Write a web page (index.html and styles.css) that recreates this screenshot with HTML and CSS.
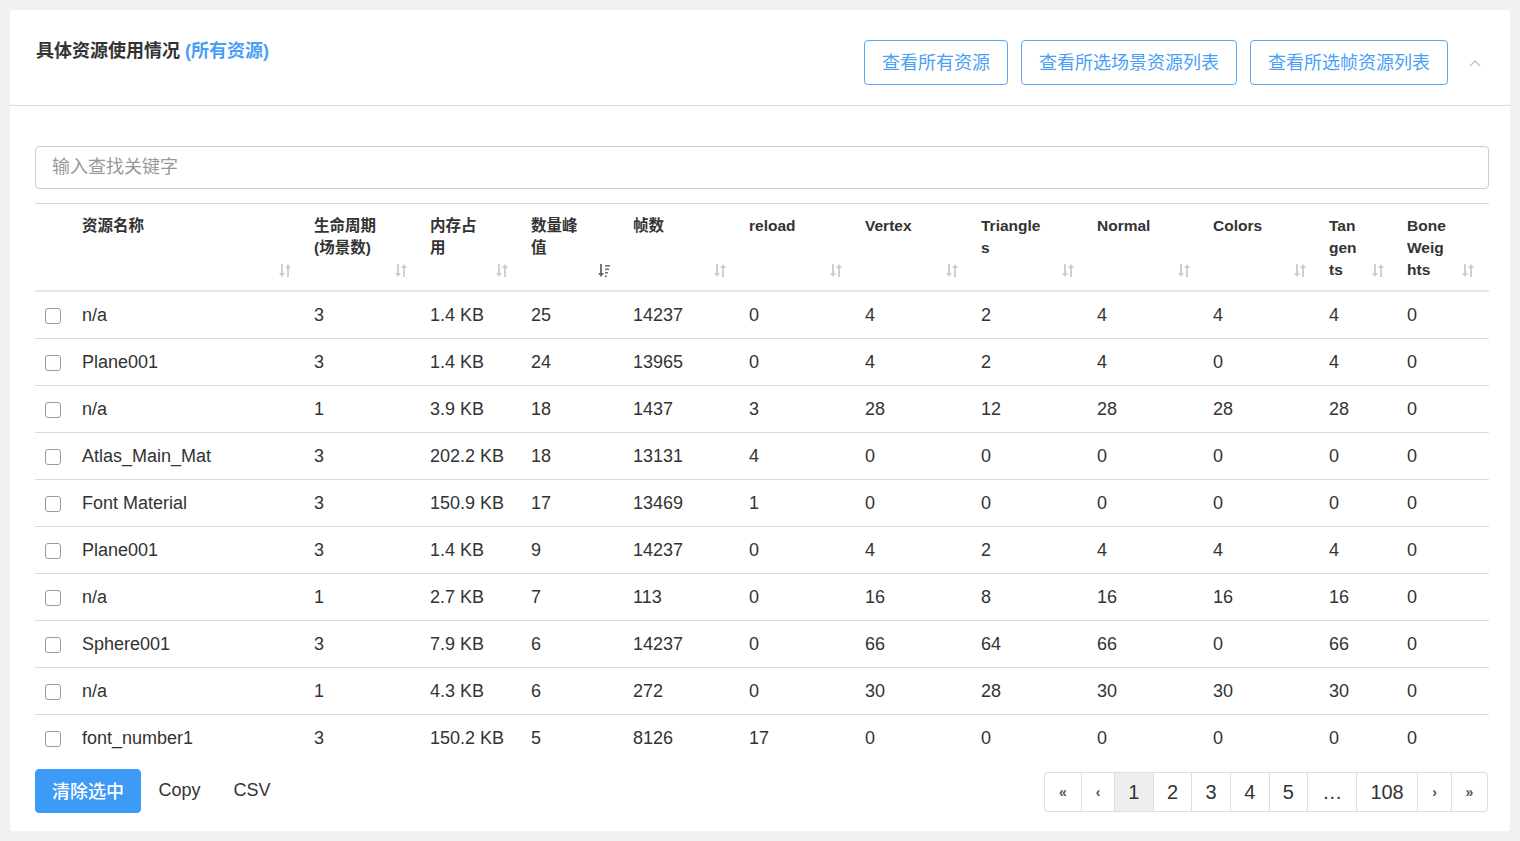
FILE: index.html
```html
<!DOCTYPE html>
<html lang="zh">
<head>
<meta charset="utf-8">
<title>具体资源使用情况</title>
<link rel="stylesheet" href="styles.css">
</head>
<body>
<div class="panel">
  <div class="panel-head">
    <div class="title">具体资源使用情况 <a class="title-link">(所有资源)</a></div>
    <div class="head-actions">
      <button class="btn-outline">查看所有资源</button>
      <button class="btn-outline">查看所选场景资源列表</button>
      <button class="btn-outline">查看所选帧资源列表</button>
      <span class="collapse">
        <svg width="12" height="8" viewBox="0 0 12 8"><polyline points="1,7 6,2 11,7" fill="none" stroke="#bfc3c7" stroke-width="1.3"/></svg>
      </span>
    </div>
  </div>
  <div class="panel-body">
    <div class="search">输入查找关键字</div>
    <table class="grid">
      <colgroup>
        <col class="c-chk"><col class="c-name"><col class="c-w116"><col class="c-w101"><col class="c-w102"><col class="c-w116"><col class="c-w116"><col class="c-w116"><col class="c-w116"><col class="c-w116"><col class="c-w116"><col class="c-w78"><col class="c-w90">
      </colgroup>
      <thead>
        <tr>
          <th></th>
          <th><div class="th"><span>资源名称</span><i class="sort"></i></div></th>
          <th><div class="th"><span>生命周期<br>(场景数)</span><i class="sort"></i></div></th>
          <th><div class="th"><span>内存占<br>用</span><i class="sort"></i></div></th>
          <th><div class="th"><span>数量峰<br>值</span><i class="sort active"></i></div></th>
          <th><div class="th"><span>帧数</span><i class="sort"></i></div></th>
          <th><div class="th"><span>reload</span><i class="sort"></i></div></th>
          <th><div class="th"><span>Vertex</span><i class="sort"></i></div></th>
          <th><div class="th"><span>Triangle<br>s</span><i class="sort"></i></div></th>
          <th><div class="th"><span>Normal</span><i class="sort"></i></div></th>
          <th><div class="th"><span>Colors</span><i class="sort"></i></div></th>
          <th><div class="th"><span>Tan<br>gen<br>ts</span><i class="sort"></i></div></th>
          <th><div class="th"><span>Bone<br>Weig<br>hts</span><i class="sort"></i></div></th>
        </tr>
      </thead>
      <tbody>
        <tr><td><span class="chk"></span></td><td>n/a</td><td>3</td><td>1.4 KB</td><td>25</td><td>14237</td><td>0</td><td>4</td><td>2</td><td>4</td><td>4</td><td>4</td><td>0</td></tr>
        <tr><td><span class="chk"></span></td><td>Plane001</td><td>3</td><td>1.4 KB</td><td>24</td><td>13965</td><td>0</td><td>4</td><td>2</td><td>4</td><td>0</td><td>4</td><td>0</td></tr>
        <tr><td><span class="chk"></span></td><td>n/a</td><td>1</td><td>3.9 KB</td><td>18</td><td>1437</td><td>3</td><td>28</td><td>12</td><td>28</td><td>28</td><td>28</td><td>0</td></tr>
        <tr><td><span class="chk"></span></td><td>Atlas_Main_Mat</td><td>3</td><td>202.2 KB</td><td>18</td><td>13131</td><td>4</td><td>0</td><td>0</td><td>0</td><td>0</td><td>0</td><td>0</td></tr>
        <tr><td><span class="chk"></span></td><td>Font Material</td><td>3</td><td>150.9 KB</td><td>17</td><td>13469</td><td>1</td><td>0</td><td>0</td><td>0</td><td>0</td><td>0</td><td>0</td></tr>
        <tr><td><span class="chk"></span></td><td>Plane001</td><td>3</td><td>1.4 KB</td><td>9</td><td>14237</td><td>0</td><td>4</td><td>2</td><td>4</td><td>4</td><td>4</td><td>0</td></tr>
        <tr><td><span class="chk"></span></td><td>n/a</td><td>1</td><td>2.7 KB</td><td>7</td><td>113</td><td>0</td><td>16</td><td>8</td><td>16</td><td>16</td><td>16</td><td>0</td></tr>
        <tr><td><span class="chk"></span></td><td>Sphere001</td><td>3</td><td>7.9 KB</td><td>6</td><td>14237</td><td>0</td><td>66</td><td>64</td><td>66</td><td>0</td><td>66</td><td>0</td></tr>
        <tr><td><span class="chk"></span></td><td>n/a</td><td>1</td><td>4.3 KB</td><td>6</td><td>272</td><td>0</td><td>30</td><td>28</td><td>30</td><td>30</td><td>30</td><td>0</td></tr>
        <tr class="last"><td><span class="chk"></span></td><td>font_number1</td><td>3</td><td>150.2 KB</td><td>5</td><td>8126</td><td>17</td><td>0</td><td>0</td><td>0</td><td>0</td><td>0</td><td>0</td></tr>
      </tbody>
    </table>
    <div class="foot">
      <div class="foot-actions">
        <button class="btn-primary">清除选中</button>
        <button class="btn-plain">Copy</button>
        <button class="btn-plain">CSV</button>
      </div>
      <ul class="pager">
        <li class="pg-first">«</li>
        <li class="pg-prev">‹</li>
        <li class="on">1</li>
        <li>2</li>
        <li>3</li>
        <li>4</li>
        <li>5</li>
        <li class="pg-dots">…</li>
        <li>108</li>
        <li class="pg-next">›</li>
        <li class="pg-last">»</li>
      </ul>
    </div>
  </div>
</div>
</body>
</html>
```

FILE: styles.css
```css
* { box-sizing: border-box; }
html, body { margin: 0; }
body {
  background: #f1f1f1;
  padding: 10px;
  font-family: "Liberation Sans", "Noto Sans CJK SC", sans-serif;
  color: #333;
  width: 1520px;
  height: 841px;
  overflow: hidden;
}
.panel {
  background: #fff;
  width: 1500px;
  height: 821px;
  border-radius: 3px;
}
.panel-head {
  display: flex;
  justify-content: space-between;
  align-items: flex-start;
  padding: 30px 20px 20px 26px;
  border-bottom: 1px solid #d3dbe3;
  height: 96px;
}
.title {
  font-size: 18px;
  line-height: 20px;
  font-weight: bold;
  color: #333;
  padding-top: 1px;
}
.title-link { color: #4a9ff5; }
.head-actions {
  display: flex;
  align-items: center;
  gap: 13px;
}
.btn-outline {
  font-family: inherit;
  height: 45px;
  padding: 0 17px 3px;
  font-size: 18px;
  color: #4a9ff5;
  background: #fff;
  border: 1.5px solid #5aa8f5;
  border-radius: 4px;
}
.collapse {
  display: flex;
  width: 30px;
  justify-content: center;
  margin-left: -1px;
  padding-top: 1px;
}
.panel-body {
  padding: 40px 21px 0 25px;
}
.search {
  height: 43px;
  border: 1px solid #ccc;
  border-radius: 4px;
  font-size: 18px;
  line-height: 41px;
  padding-left: 16px;
  color: #999;
}
.grid {
  margin-top: 14px;
  width: 1454px;
  border-collapse: collapse;
  table-layout: fixed;
  border-top: 1px solid #cfd7df;
}
.c-chk { width: 39px; }
.c-name { width: 232px; }
.c-w116 { width: 116px; }
.c-w101 { width: 101px; }
.c-w102 { width: 102px; }
.c-w78 { width: 78px; }
.c-w90 { width: 90px; }
.grid th {
  vertical-align: top;
  text-align: left;
  padding: 11px 0 9px 8px;
  font-size: 15.5px;
  line-height: 22px;
  font-weight: bold;
  color: #333;
  border-bottom: 2px solid #e3e6e9;
}
.th {
  display: flex;
  justify-content: space-between;
  height: 66px;
  padding-right: 15px;
}
.th span { white-space: nowrap; }
.sort {
  align-self: flex-end;
  width: 12px;
  height: 15px;
  margin-bottom: 3px;
  background: url("data:image/svg+xml,%3Csvg xmlns='http://www.w3.org/2000/svg' width='12' height='15' viewBox='0 0 12 15'%3E%3Cg fill='none' stroke='%23c9ccd0' stroke-width='1.8'%3E%3Cline x1='3' y1='1' x2='3' y2='12'/%3E%3Cline x1='9' y1='3' x2='9' y2='14'/%3E%3C/g%3E%3Cpolygon points='0,10 6,10 3,14' fill='%23c9ccd0'/%3E%3Cpolygon points='6,5 12,5 9,1' fill='%23c9ccd0'/%3E%3C/svg%3E") no-repeat center;
}
.sort.active {
  background: url("data:image/svg+xml,%3Csvg xmlns='http://www.w3.org/2000/svg' width='12' height='15' viewBox='0 0 12 15'%3E%3Cline x1='3' y1='1' x2='3' y2='12' stroke='%23666' stroke-width='1.8'/%3E%3Cpolygon points='0,10 6,10 3,14' fill='%23666'/%3E%3Cg fill='%23777'%3E%3Crect x='7' y='2' width='5' height='1.6'/%3E%3Crect x='7' y='5.5' width='4' height='1.6'/%3E%3Crect x='7' y='9' width='3' height='1.6'/%3E%3Crect x='7' y='12.5' width='2' height='1.6'/%3E%3C/g%3E%3C/svg%3E") no-repeat center;
}
.grid td {
  padding: 8px 8px;
  font-size: 18px;
  line-height: 30px;
  height: 47px;
  border-bottom: 1px solid #d6dde5;
  white-space: nowrap;
  color: #333;
}
.grid tr.last td { border-bottom: none; }
.grid td:first-child { padding-left: 10px; }
.chk {
  display: block;
  width: 16px;
  height: 16px;
  border: 1px solid #9a9a9a;
  border-radius: 3px;
  background: #fff;
  margin-top: 2px;
}
.foot {
  margin-top: 7px;
  display: flex;
  justify-content: space-between;
  align-items: center;
}
.foot-actions { display: flex; align-items: center; }
.btn-primary {
  font-family: inherit;
  height: 44px;
  padding: 0 16px 2px;
  font-size: 18px;
  color: #fff;
  background: #3d9bf7;
  border: 1px solid #3d9bf7;
  border-radius: 4px;
  font-weight: 500;
}
.btn-plain {
  font-family: inherit;
  height: 44px;
  padding: 0 16.5px;
  font-size: 18px;
  color: #333;
  background: transparent;
  border: none;
}
.btn-primary + .btn-plain { margin-left: 1px; }
.pager {
  list-style: none;
  margin: 2px 1px 0 0;
  padding: 0;
  display: flex;
  border: 1px solid #ddd;
  border-radius: 4px;
  overflow: hidden;
}
.pager li {
  height: 38px;
  line-height: 38px;
  font-size: 20px;
  padding: 0 13.25px;
  border-left: 1px solid #ddd;
  color: #333;
  text-align: center;
}
.pager li:first-child { border-left: none; }
.pager li.on { background: #eee; }
.pager .pg-first, .pager .pg-prev, .pager .pg-next, .pager .pg-last {
  font-size: 14px;
  font-weight: bold;
  color: #555;
}
.pager .pg-first { width: 36px; padding: 0; }
.pager .pg-prev { width: 33px; padding: 0; }
.pager .pg-next { width: 34px; padding: 0; }
.pager .pg-last { width: 36px; padding: 0; }
.pager .pg-dots { width: 49px; padding: 0; }
```
